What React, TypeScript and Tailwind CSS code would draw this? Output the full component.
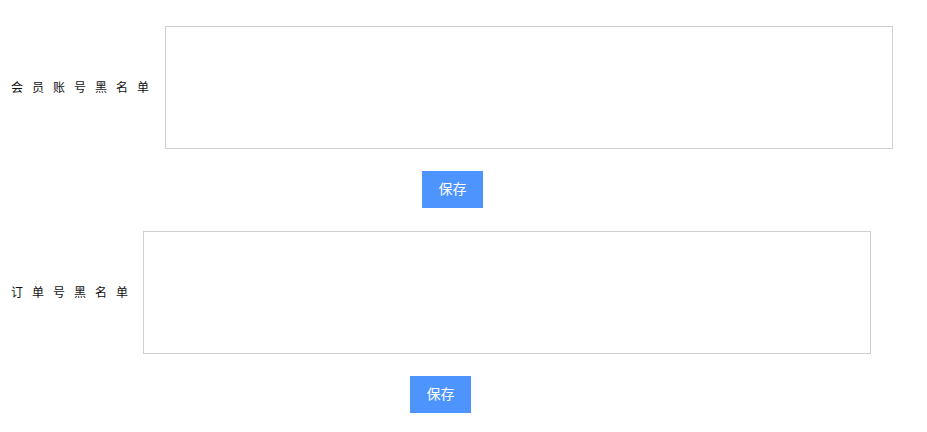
import React from 'react'

const font = { fontFamily: '"Liberation Sans", "Noto Sans CJK SC", sans-serif' }

function Block({ label, gap, btnLeft, first }: { label: string; gap: string; btnLeft: string; first?: boolean }) {
  return (
    <div className={first ? 'pt-[26px]' : 'pt-[23px]'}>
      <div className="flex items-center pl-[11px]">
        <span className={`text-[12px] tracking-[9px] text-[#111] whitespace-nowrap ${gap}`}>{label}</span>
        <textarea className="w-[728px] h-[123px] border border-[#d0d0d0] outline-none resize-none" />
      </div>
      <div className={`mt-[22px] ${btnLeft}`}>
        <button className="w-[61px] h-[37px] bg-[#4d94ff] text-white text-[14px]">保存</button>
      </div>
    </div>
  )
}

export default function App() {
  return (
    <div className="w-[927px] h-[432px] bg-white" style={font}>
      <Block label="会员账号黑名单" gap="mr-[7px]" btnLeft="pl-[422px]" first />
      <Block label="订单号黑名单" gap="mr-[6px]" btnLeft="pl-[410px]" />
    </div>
  )
}
